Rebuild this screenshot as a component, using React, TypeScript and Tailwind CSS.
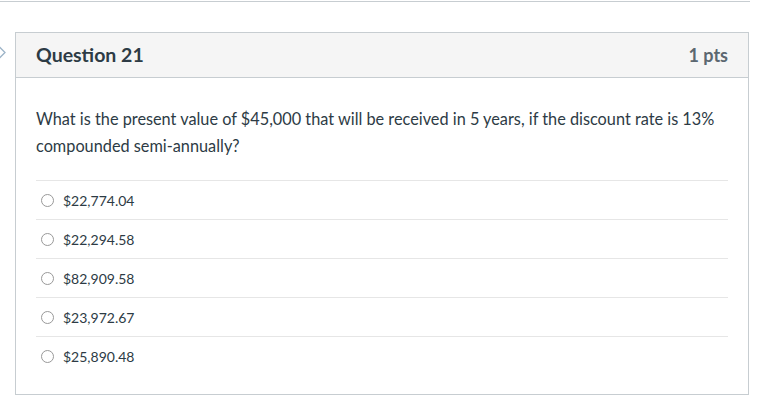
import React from "react"

const answers = ["$22,774.04", "$22,294.58", "$82,909.58", "$23,972.67", "$25,890.48"]

export default function App() {
  return (
    <div
      className="relative w-[759px] h-[410px] bg-white overflow-hidden"
      style={{ fontFamily: "Lato, 'Liberation Sans', sans-serif" }}
    >
      <div className="mt-px w-[750px] border-t border-[#c7cdd1]" />

      {/* side chevron */}
      <svg className="absolute left-[-4px] top-[44px]" width="12" height="17" viewBox="0 0 12 17">
        <path d="M2 1.5 L9 8.5 L2 15.5" fill="none" stroke="#9db4c8" strokeWidth="1.3" />
      </svg>

      <div className="ml-[15px] mt-[30px] w-[734px] h-[363px] border border-[#c7cdd1] flex flex-col">
        <div className="h-[45px] shrink-0 bg-[#f5f5f5] border-b border-[#c7cdd1] px-5 flex items-center justify-between">
          <span className="text-[19.5px] font-bold text-[#2d3b45]">Question 21</span>
          <span className="text-[18px] font-bold text-[#5b6770]">1 pts</span>
        </div>

        <div className="px-5 pt-[27px]">
          <p className="text-[16.3px] leading-[27px] text-[#2d3b45]">
            What is the present value of $45,000 that will be received in 5 years, if the discount rate is 13%
            compounded semi-annually?
          </p>

          <div className="mt-[21px]">
            {answers.map((a) => (
              <div key={a} className="h-[39px] border-t border-[#e6e6e6] flex items-center pl-[5px] gap-[9px]">
                <span className="w-[13px] h-[13px] rounded-full border border-[#999999] bg-white" />
                <span className="text-[14px] text-[#2d3b45]">{a}</span>
              </div>
            ))}
          </div>
        </div>
      </div>
    </div>
  )
}
